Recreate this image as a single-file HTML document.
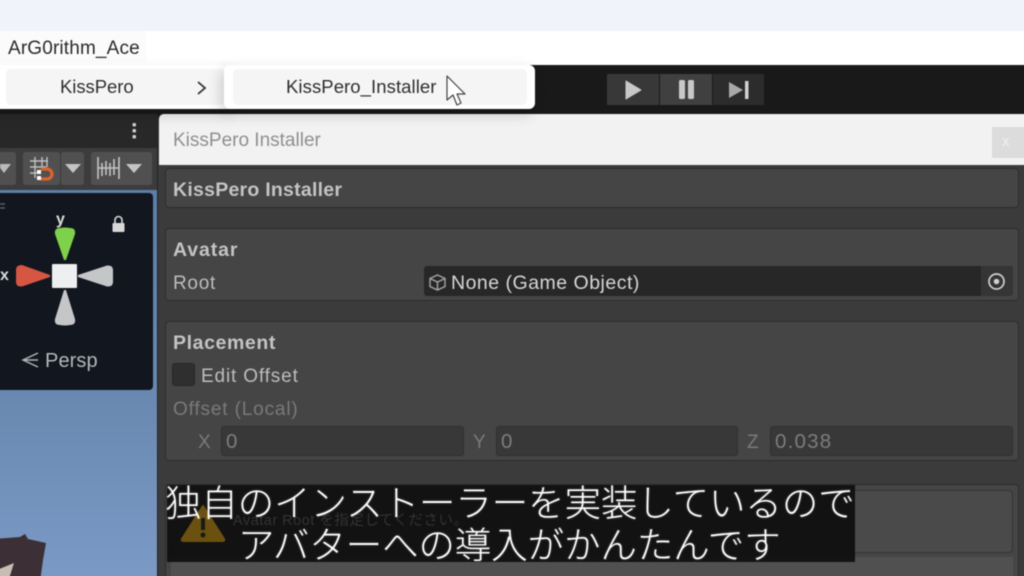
<!DOCTYPE html>
<html lang="ja"><head><meta charset="utf-8"><style>
html,body{margin:0;padding:0;overflow:hidden}
html{background:#1a1a1a}
#w{width:1024px;height:576px;position:relative;background:#1a1a1a;font-family:"Liberation Sans","Noto Sans CJK JP",sans-serif;filter:blur(.45px)}
body{width:1024px;height:576px;overflow:hidden}
.a{position:absolute;box-sizing:border-box}
.t{position:absolute;white-space:nowrap;line-height:1}
.panel{position:absolute;left:165px;width:854px;background:#454545;border:1px solid #2c2c2c;border-radius:4px;box-sizing:border-box}
.lab{color:#bdbdbd;font-size:19px;letter-spacing:.7px}
.b{font-weight:bold;color:#c4c4c4;letter-spacing:.25px}
.fld{position:absolute;top:426px;height:30px;background:#383838;border:1px solid #303030;border-radius:3px;box-sizing:border-box;color:#7d7d7d;font-size:20.500px;letter-spacing:1.200px;line-height:29px;padding-left:4px}
.dim{color:#7a7a7a;font-size:19px;letter-spacing:.85px}
.tb{position:absolute;background:#505050;top:152px;height:33px;border-radius:3px}
.sub{text-align:center;font-size:36.4px;font-weight:300;color:#fff;line-height:37px;font-family:'Liberation Sans','WenQuanYi Zen Hei','Noto Sans CJK JP',sans-serif;text-shadow:0 0 2px rgba(255,255,255,.35)}
</style></head><body><div id="w">
<div class="a" style="left:-6px;top:-6px;width:1040px;height:37px;background:#f0f3f9"></div>
<div class="a" style="left:-6px;top:31px;width:1040px;height:34px;background:#fff"></div>
<div class="a" style="left:-6px;top:31px;width:152px;height:31px;background:#fbfbfb"></div>
<div class="t" style="left:8px;top:39px;font-size:19px;letter-spacing:.15px;color:#2a2a2a">ArG0rithm_Ace</div>

<div class="a" style="left:-6px;top:65px;width:1040px;height:49px;background:#191919"></div>
<div class="a" style="left:607px;top:74px;width:52px;height:31px;background:#383838"></div>
<div class="a" style="left:660px;top:74px;width:52px;height:31px;background:#404040"></div>
<div class="a" style="left:713px;top:74px;width:51px;height:31px;background:#2c2c2c"></div>
<svg class="a" style="left:600px;top:70px" width="180" height="40"><path d="M26 11L41 20L26 29Z" fill="#c8c8c8" stroke="#c8c8c8" stroke-linejoin="round"/><rect x="79" y="10" width="6" height="19" rx="1.500" fill="#c8c8c8"/><rect x="88" y="10" width="6" height="19" rx="1.500" fill="#c8c8c8"/><path d="M129 12L143 20L129 28Z" fill="#a8a8a8"/><rect x="145" y="11" width="3.500" height="18" fill="#d0d0d0"/></svg>

<!-- left panel -->
<div class="a" style="left:-6px;top:114px;width:164px;height:34px;background:#282828"></div>
<div class="a" style="left:-6px;top:148px;width:164px;height:42px;background:#3c3c3c"></div>
<svg class="a" style="left:0;top:114px" width="158" height="34">
<rect x="132.500" y="9" width="3.500" height="3.500" rx="1" fill="#ccc"/><rect x="132.500" y="15" width="3.500" height="3.500" rx="1" fill="#ccc"/><rect x="132.500" y="21" width="3.500" height="3.500" rx="1" fill="#ccc"/>
</svg>
<div class="tb" style="left:-10px;width:26px"></div>
<div class="tb" style="left:23px;width:37px"></div>
<div class="tb" style="left:61px;width:23px"></div>
<div class="tb" style="left:91px;width:61px"></div>
<svg class="a" style="left:0;top:148px" width="158" height="42">
<path d="M-3 16H11L4 25Z" fill="#bbb"/>
<path d="M65 16H81L73 25Z" fill="#c4c4c4"/><path d="M126 16H142L134 25Z" fill="#c4c4c4"/>
<g stroke="#c0c0c0" stroke-width="1.400" fill="none"><path d="M30 13H48M30 19H46M30 25H38M35 9V30M42 9V20M47 9V19"/></g>
<path d="M41 21H47a5 5 0 0 1 0 10H41" fill="none" stroke="#e0622c" stroke-width="3.200"/>
<rect x="37" y="22" width="4" height="4" fill="#fff"/><rect x="37" y="28" width="4" height="4" fill="#fff"/>
<g stroke="#c4c4c4" stroke-width="1.600" fill="none"><path d="M98 9V31M119 9V31M98 20H119M102 15V28M106 13V27M110 15V28M114 11V27"/></g>
</svg>

<!-- scene -->
<div class="a" style="left:-6px;top:190px;width:164px;height:392px;background:linear-gradient(180deg,#5d7ea8 0,#6888b0 50%,#7b9ac6 100%)"></div>
<div class="a" style="left:-6px;top:193px;width:159px;height:197px;background:#11161f;border-radius:0 4px 4px 0"></div>
<svg class="a" style="left:0;top:190px;overflow:visible" width="158" height="386">
<path d="M0 14H5M0 18H5" stroke="#55606c" stroke-width="1.500"/>
<path d="M55 44Q54 38 60 38Q65 37 70 38Q76 38 75 44L66 70H64Z" fill="#7fd04a"/>
<path d="M22 75Q16 75 16 80V92Q16 97 22 96.500L50 87V85Z" fill="#d65644"/>
<path d="M107 75.500Q113 75 113 80V92Q113 97 107 96.500L78 87V85Z" fill="#c4c6c8"/>
<path d="M55 129Q54 135 60 135Q65 136 70 135Q76 135 75 129L66 100H64Z" fill="#c4c6c8"/>
<rect x="52" y="74" width="25" height="24" rx="1" fill="#eeeff1"/>
<path d="M38 163L23 170L38 177M38 170H24" fill="none" stroke="#aeb2b6" stroke-width="1.500"/>
<rect x="112.500" y="33" width="12" height="9" rx="1" fill="#d8d8d8"/><path d="M115 33V30a3.500 3.500 0 0 1 7 0V33" fill="none" stroke="#d8d8d8" stroke-width="1.600"/>
<path d="M-6 349L20 347L25 344L28 349L46 353L43 370L40 392H-6Z" fill="#3c2f35"/>
<path d="M-6 381L14 373L8 392H-6Z" fill="#c9bcb4"/>
</svg>
<div class="t" style="left:56px;top:212px;font-size:16px;font-weight:bold;color:#dcdcdc">y</div>
<div class="t" style="left:0;top:268px;font-size:16px;font-weight:bold;color:#dcdcdc">x</div>
<div class="t" style="left:45px;top:351px;font-size:20px;letter-spacing:.1px;color:#b4b8bc">Persp</div>

<!-- window -->
<div class="a" style="left:157px;top:114px;width:1px;height:468px;background:#232323"></div>
<div class="a" style="left:158px;top:114px;width:872px;height:468px;background:#3b3b3b;border-radius:5px 5px 0 0"></div>
<div class="a" style="left:159px;top:114px;width:871px;height:51px;background:#f2f2f2;border-radius:5px 5px 0 0"></div>
<div class="t" style="left:173px;top:131px;font-size:19px;color:#8f8f8f">KissPero Installer</div>
<div class="a" style="left:992px;top:127px;width:38px;height:31px;background:#dcdcdc"></div>
<div class="t" style="left:1002px;top:134px;font-size:15px;color:#f0f0f0">x</div>

<div class="panel" style="top:168px;height:40px"></div>
<div class="t b" style="left:173px;top:181px;font-size:19.500px">KissPero Installer</div>

<div class="panel" style="top:228px;height:73px"></div>
<div class="t b" style="left:173px;top:241px;font-size:19.500px;letter-spacing:.9px">Avatar</div>
<div class="t lab" style="left:173px;top:274px">Root</div>
<div class="a" style="left:424px;top:266px;width:589px;height:30px;background:#272727;border-radius:3px"></div>
<div class="a" style="left:981px;top:266px;width:32px;height:30px;background:#353535;border-radius:0 3px 3px 0"></div>
<svg class="a" style="left:428px;top:273px" width="20" height="20"><path d="M9.500 2L17 5.500V13.500L9.500 17L2 13.500V5.500ZM2 5.500L9.500 9L17 5.500M9.500 9V17" fill="none" stroke="#a0a0a0" stroke-width="1.500"/></svg>
<div class="t" style="left:451px;top:274px;font-size:19.500px;letter-spacing:.5px;color:#d6d6d6">None (Game Object)</div>
<svg class="a" style="left:986px;top:271px" width="21" height="21"><circle cx="10.500" cy="10.500" r="7.500" fill="none" stroke="#d0d0d0" stroke-width="1.700"/><circle cx="10.500" cy="10.500" r="2.800" fill="#d0d0d0"/></svg>

<div class="panel" style="top:321px;height:140px"></div>
<div class="t b" style="left:173px;top:334px;font-size:19.500px;letter-spacing:.6px">Placement</div>
<div class="a" style="left:172px;top:363px;width:23px;height:23px;background:#2f2f2f;border:1px solid #272727;border-radius:3px"></div>
<div class="t lab" style="left:201px;top:367px;letter-spacing:.85px">Edit Offset</div>
<div class="t dim" style="left:173px;top:400px">Offset (Local)</div>
<div class="t dim" style="left:198px;top:433px;letter-spacing:0">X</div>
<div class="fld" style="left:221px;width:243px">0</div>
<div class="t dim" style="left:473px;top:433px;letter-spacing:0">Y</div>
<div class="fld" style="left:496px;width:242px">0</div>
<div class="t dim" style="left:747px;top:433px;letter-spacing:0">Z</div>
<div class="fld" style="left:770px;width:243px">0.038</div>

<div class="panel" style="top:484px;height:98px;border-radius:4px 4px 0 0"></div>
<div class="a" style="left:171px;top:490px;width:842px;height:63px;background:#4a4a4a;border:1px solid #333;border-radius:4px"></div>
<div class="a" style="left:171px;top:557px;width:842px;height:25px;background:#505050"></div>

<!-- subtitle band -->
<div class="a" style="left:167px;top:485px;width:688px;height:77px;background:rgba(12,12,12,.9)"></div>
<svg class="a" style="left:178px;top:503px" width="50" height="42"><path d="M25 3L46 36Q47 38 44 38H6Q3 38 4 36Z" fill="#6b5110" stroke="#6b5110" stroke-width="2" stroke-linejoin="round"/><rect x="23" y="15" width="4" height="12" fill="#1c1a14"/><circle cx="25" cy="32" r="2.500" fill="#1c1a14"/></svg>
<div class="t" style="left:233px;top:514px;font-size:14.500px;letter-spacing:.5px;color:#333">Avatar Root を指定してください。</div>
<div class="t sub" style="left:165px;top:485px">独自のインストーラーを実装しているので</div>
<div class="t sub" style="left:238px;top:527px">アバターへの導入がかんたんです</div>

<!-- menu -->
<div class="a" style="left:-6px;top:65px;width:238px;height:44px;background:#fff;border-radius:0 0 0 6px;box-shadow:0 6px 14px rgba(0,0,0,.15)"></div>
<div class="a" style="left:6px;top:69px;width:220px;height:36px;background:#f5f5f5;border-radius:5px"></div>
<div class="a" style="left:224px;top:65px;width:311px;height:44px;background:#fff;border-radius:6px;box-shadow:-3px 5px 14px rgba(0,0,0,.18)"></div>
<div class="a" style="left:233px;top:69px;width:294px;height:36px;background:#f5f5f5;border-radius:5px"></div>
<div class="t" style="left:60px;top:78px;font-size:18.500px;letter-spacing:-.05px;color:#2e2e2e">KissPero</div>
<svg class="a" style="left:195px;top:80px" width="14" height="16"><path d="M3 2L10 8L3 14" fill="none" stroke="#333" stroke-width="1.800"/></svg>
<div class="t" style="left:286px;top:78px;font-size:18.500px;letter-spacing:.08px;color:#2e2e2e">KissPero_Installer</div>
<svg class="a" style="left:445px;top:74px" width="24" height="34"><path d="M2 2V26L8 21L12 31L16 29L12 20H20Z" fill="#fff" stroke="#444" stroke-width="1.200" stroke-linejoin="round"/></svg>
</div></body></html>
